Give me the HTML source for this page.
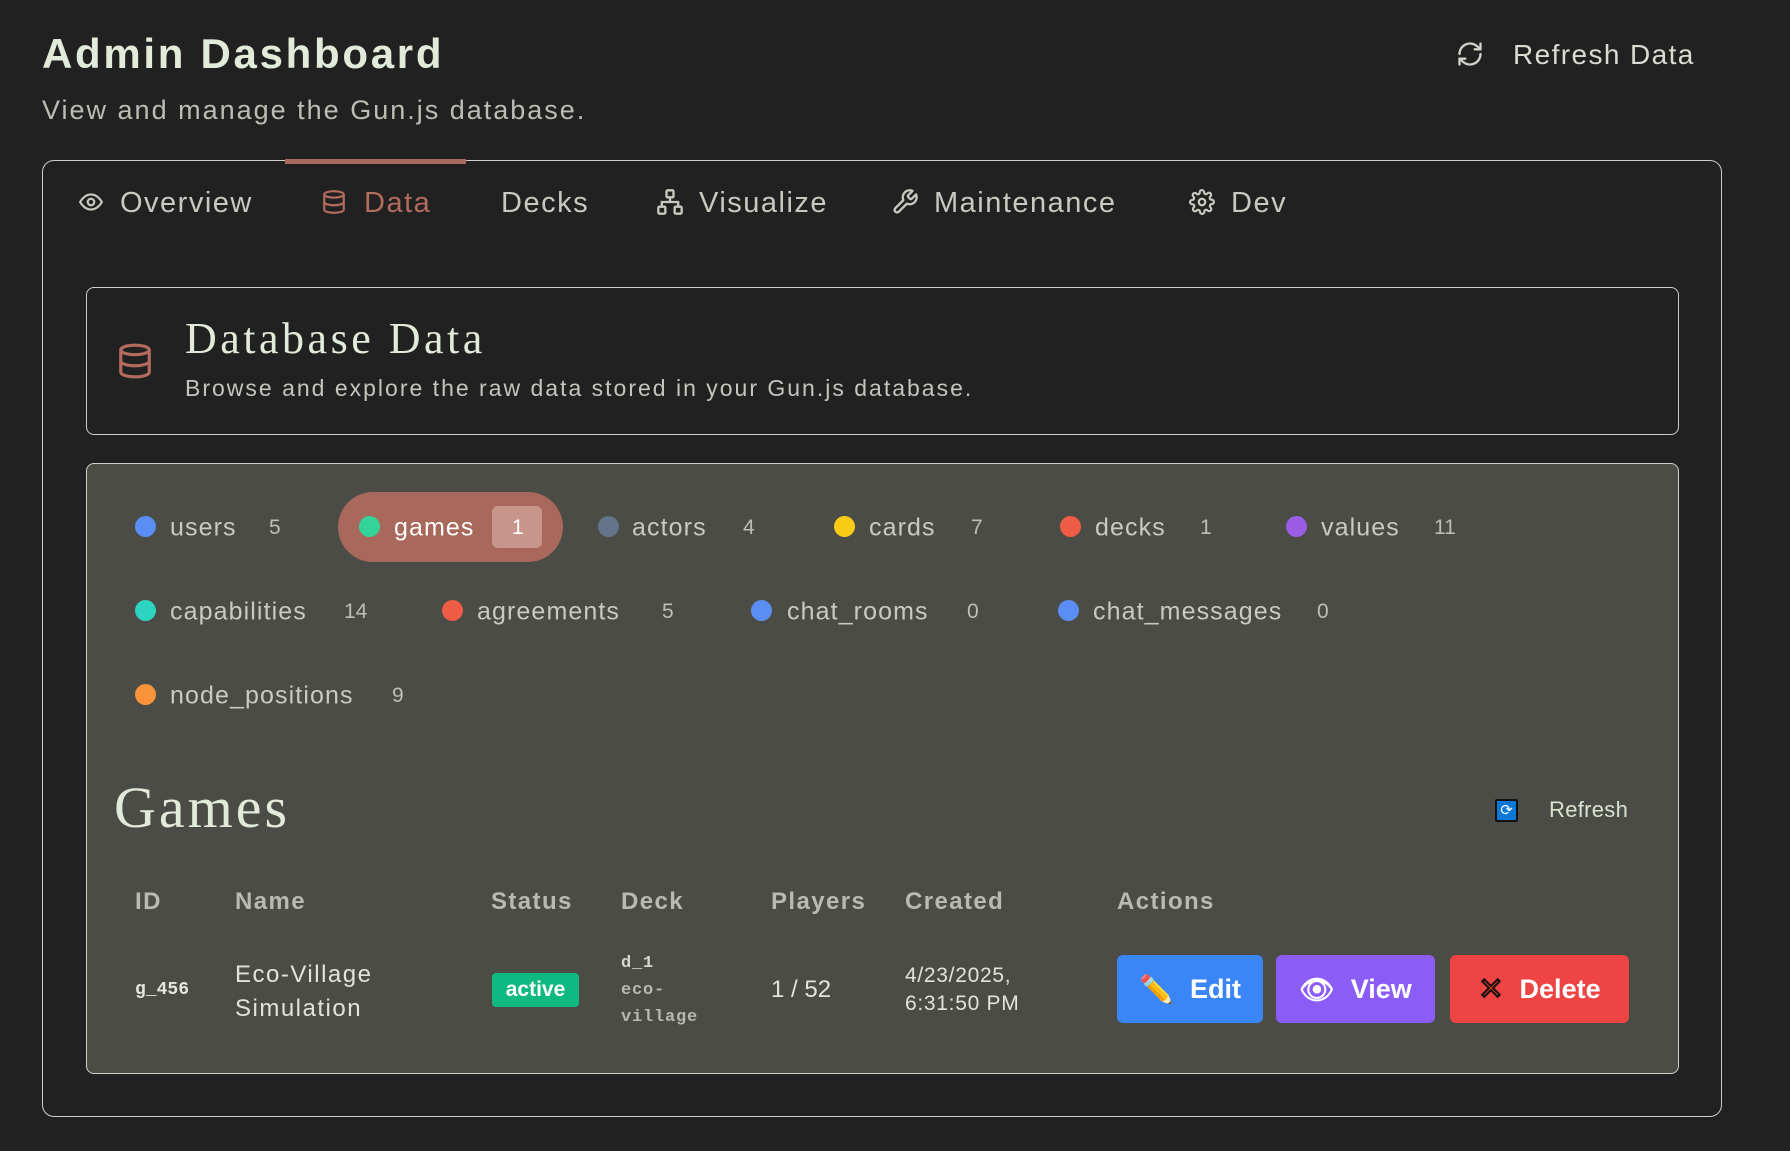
<!DOCTYPE html>
<html><head><meta charset="utf-8"><style>
*{box-sizing:border-box;margin:0;padding:0}
body{width:1790px;height:1151px;background:#212121;font-family:"Liberation Sans",sans-serif;color:#d8dcd2;position:relative;overflow:hidden}
.a{position:absolute;white-space:nowrap}
.serif{font-family:"Liberation Serif",serif}
.mono{font-family:"Liberation Mono",monospace}
.dot{position:absolute;width:21px;height:21px;border-radius:50%}
.chip{position:absolute;font-size:25px;color:#c9cbc2;transform:translateY(-50%);letter-spacing:1.1px}
.cnt{position:absolute;font-size:21px;color:#bdbfb6;transform:translateY(-50%)}
.th{position:absolute;font-size:24px;font-weight:bold;color:#b9bab2;transform:translateY(-50%);letter-spacing:1.4px}
.tab{position:absolute;top:187px;font-size:29px;color:#c8c9c0;letter-spacing:1.5px}
.btn{position:absolute;top:955px;height:68px;border-radius:6px;color:#fff;font-weight:bold;font-size:27px;display:flex;align-items:center;justify-content:center;gap:16px}
</style></head><body>
<div class="a" style="left:42px;top:30px;font-size:42px;font-weight:bold;color:#e2ebd9;letter-spacing:2.7px">Admin Dashboard</div>
<div class="a" style="left:42px;top:95px;font-size:27px;color:#bcbdb5;letter-spacing:2px">View and manage the Gun.js database.</div>
<svg class="a" style="left:1456px;top:40px" width="28" height="28" viewBox="0 0 24 24" fill="none" stroke="#d0d2c9" stroke-width="2" stroke-linecap="round" stroke-linejoin="round"><path d="M3 12a9 9 0 0 1 15-6.7L21 8"/><path d="M21 3v5h-5"/><path d="M21 12a9 9 0 0 1-15 6.7L3 16"/><path d="M8 16H3v5"/></svg>
<div class="a" style="left:1513px;top:39px;font-size:28px;color:#d8dcd2;letter-spacing:1.4px">Refresh Data</div>

<div class="a" style="left:42px;top:160px;width:1680px;height:957px;border:1.5px solid #cfd1c8;border-radius:12px"></div>
<div class="a" style="left:285px;top:159px;width:181px;height:5px;background:#a86a5e"></div>
<svg class="a" style="left:78px;top:189px" width="26" height="26" viewBox="0 0 24 24" fill="none" stroke="#c8c9c0" stroke-width="2"><path d="M2 12s3.5-7 10-7 10 7 10 7-3.5 7-10 7S2 12 2 12z"/><circle cx="12" cy="12" r="3"/></svg>
<div class="tab" style="left:120px">Overview</div>
<svg class="a" style="left:321px;top:188px" width="26" height="28" viewBox="0 0 24 24" fill="none" stroke="#b36b5e" stroke-width="2"><ellipse cx="12" cy="5" rx="9" ry="3"/><path d="M3 5v14c0 1.7 4 3 9 3s9-1.3 9-3V5"/><path d="M3 12c0 1.7 4 3 9 3s9-1.3 9-3"/></svg>
<div class="tab" style="left:364px;color:#b36b5e">Data</div>
<div class="tab" style="left:501px">Decks</div>
<svg class="a" style="left:656px;top:188px" width="28" height="28" viewBox="0 0 24 24" fill="none" stroke="#c8c9c0" stroke-width="2"><rect x="9" y="2" width="6" height="6" rx="1"/><rect x="2" y="16" width="6" height="6" rx="1"/><rect x="16" y="16" width="6" height="6" rx="1"/><path d="M5 16v-4h14v4M12 8v4"/></svg>
<div class="tab" style="left:699px">Visualize</div>
<svg class="a" style="left:891px;top:188px" width="28" height="28" viewBox="0 0 24 24" fill="none" stroke="#c8c9c0" stroke-width="2" stroke-linejoin="round"><path d="M14.7 6.3a1 1 0 0 0 0 1.4l1.6 1.6a1 1 0 0 0 1.4 0l3.8-3.8a6 6 0 0 1-7.9 7.9l-6.9 6.9a2.1 2.1 0 0 1-3-3l6.9-6.9a6 6 0 0 1 7.9-7.9z"/></svg>
<div class="tab" style="left:934px">Maintenance</div>
<svg class="a" style="left:1189px;top:189px" width="26" height="26" viewBox="0 0 24 24" fill="none" stroke="#c8c9c0" stroke-width="2"><circle cx="12" cy="12" r="3"/><path d="M19.4 15a1.7 1.7 0 0 0 .3 1.8l.1.1a2 2 0 1 1-2.8 2.8l-.1-.1a1.7 1.7 0 0 0-2.8 1.2V21a2 2 0 1 1-4 0v-.1a1.7 1.7 0 0 0-2.8-1.2l-.1.1a2 2 0 1 1-2.8-2.8l.1-.1a1.7 1.7 0 0 0-1.2-2.8H3a2 2 0 1 1 0-4h.1a1.7 1.7 0 0 0 1.2-2.8l-.1-.1a2 2 0 1 1 2.8-2.8l.1.1a1.7 1.7 0 0 0 2.8-1.2V3a2 2 0 1 1 4 0v.1a1.7 1.7 0 0 0 2.8 1.2l.1-.1a2 2 0 1 1 2.8 2.8l-.1.1a1.7 1.7 0 0 0 1.2 2.8H21a2 2 0 1 1 0 4h-.1a1.7 1.7 0 0 0-1.5 1z"/></svg>
<div class="tab" style="left:1231px">Dev</div>

<div class="a" style="left:86px;top:287px;width:1593px;height:148px;border:1.5px solid #cfd1c8;border-radius:8px"></div>
<svg class="a" style="left:116px;top:341px" width="38" height="40" viewBox="0 0 24 24" fill="none" stroke="#b36b5e" stroke-width="2"><ellipse cx="12" cy="5" rx="9" ry="3"/><path d="M3 5v14c0 1.7 4 3 9 3s9-1.3 9-3V5"/><path d="M3 12c0 1.7 4 3 9 3s9-1.3 9-3"/></svg>
<div class="a serif" style="left:185px;top:313px;font-size:44px;color:#e2ebd9;letter-spacing:3.5px">Database Data</div>
<div class="a" style="left:185px;top:375px;font-size:23px;color:#c4c5bd;letter-spacing:2px">Browse and explore the raw data stored in your Gun.js database.</div>

<div class="a" style="left:86px;top:463px;width:1593px;height:611px;border:1.5px solid #cfd1c8;border-radius:8px;background:#4c4c46"></div>
<div class="a" style="left:338px;top:492px;width:225px;height:70px;border-radius:35px;background:#a8695c"></div>
<div class="a" style="left:492px;top:506px;width:50px;height:42px;border-radius:6px;background:#c7958a"></div>

<div class="dot" style="left:135px;top:516px;background:#5b8ef5"></div><div class="chip" style="left:170px;top:528px">users</div><div class="cnt" style="left:269px;top:528px">5</div>
<div class="dot" style="left:359px;top:516px;background:#34d399"></div><div class="chip" style="left:394px;top:528px;color:#fff">games</div><div class="cnt" style="left:512px;top:528px;color:#fff">1</div>
<div class="dot" style="left:598px;top:516px;background:#64748b"></div><div class="chip" style="left:632px;top:528px">actors</div><div class="cnt" style="left:743px;top:528px">4</div>
<div class="dot" style="left:834px;top:516px;background:#facc15"></div><div class="chip" style="left:869px;top:528px">cards</div><div class="cnt" style="left:971px;top:528px">7</div>
<div class="dot" style="left:1060px;top:516px;background:#ef5c45"></div><div class="chip" style="left:1095px;top:528px">decks</div><div class="cnt" style="left:1200px;top:528px">1</div>
<div class="dot" style="left:1286px;top:516px;background:#9b5de5"></div><div class="chip" style="left:1321px;top:528px">values</div><div class="cnt" style="left:1434px;top:528px">11</div>

<div class="dot" style="left:135px;top:600px;background:#2dd4bf"></div><div class="chip" style="left:170px;top:612px">capabilities</div><div class="cnt" style="left:344px;top:612px">14</div>
<div class="dot" style="left:442px;top:600px;background:#ef5c45"></div><div class="chip" style="left:477px;top:612px">agreements</div><div class="cnt" style="left:662px;top:612px">5</div>
<div class="dot" style="left:751px;top:600px;background:#5b8ef5"></div><div class="chip" style="left:787px;top:612px">chat_rooms</div><div class="cnt" style="left:967px;top:612px">0</div>
<div class="dot" style="left:1058px;top:600px;background:#5b8ef5"></div><div class="chip" style="left:1093px;top:612px">chat_messages</div><div class="cnt" style="left:1317px;top:612px">0</div>

<div class="dot" style="left:135px;top:684px;background:#fb923c"></div><div class="chip" style="left:170px;top:696px">node_positions</div><div class="cnt" style="left:392px;top:696px">9</div>

<div class="a serif" style="left:114px;top:774px;font-size:58px;color:#e2ebd9;letter-spacing:3px">Games</div>
<div class="a" style="left:1495px;top:799px;width:23px;height:23px;background:#0a78d7;border:2px solid #111;border-radius:2px;color:#fff;font-size:15px;line-height:19px;text-align:center">⟳</div>
<div class="a" style="left:1549px;top:797px;font-size:22px;color:#d8e4d0;letter-spacing:0.3px">Refresh</div>

<div class="th" style="left:135px;top:902px">ID</div>
<div class="th" style="left:235px;top:902px">Name</div>
<div class="th" style="left:491px;top:902px">Status</div>
<div class="th" style="left:621px;top:902px">Deck</div>
<div class="th" style="left:771px;top:902px">Players</div>
<div class="th" style="left:905px;top:902px">Created</div>
<div class="th" style="left:1117px;top:902px">Actions</div>

<div class="a mono" style="left:135px;top:980px;font-size:18px;font-weight:bold;color:#e6e6e0">g_456</div>
<div class="a" style="left:235px;top:958px;font-size:24px;line-height:34px;color:#e2e4dc;letter-spacing:1.5px">Eco-Village<br>Simulation</div>
<div class="a" style="left:492px;top:973px;width:87px;height:34px;border-radius:4px;background:#10b981;color:#fff;font-weight:bold;font-size:21px;text-align:center;line-height:34px">active</div>
<div class="a mono" style="left:621px;top:950px;font-size:17px;line-height:27px;font-weight:bold;color:#d8d8d0;letter-spacing:0.8px">d_1<br><span style="color:#b8b8b0">eco-<br>village</span></div>
<div class="a" style="left:771px;top:976px;font-size:24px;color:#e2e4dc">1 / 52</div>
<div class="a" style="left:905px;top:962px;font-size:21px;line-height:28px;color:#e2e4dc;letter-spacing:0.7px">4/23/2025,<br>6:31:50 PM</div>

<div class="btn" style="left:1117px;width:146px;background:#3b86f6"><span style="font-size:28px">✏️</span>Edit</div>
<div class="btn" style="left:1276px;width:159px;background:#8b5cf6"><span style="font-size:28px">👁</span>View</div>
<div class="btn" style="left:1450px;width:179px;background:#ef4444"><span style="font-size:30px;color:#e23b1c;-webkit-text-stroke:1px #111">✕</span>Delete</div>
</body></html>
